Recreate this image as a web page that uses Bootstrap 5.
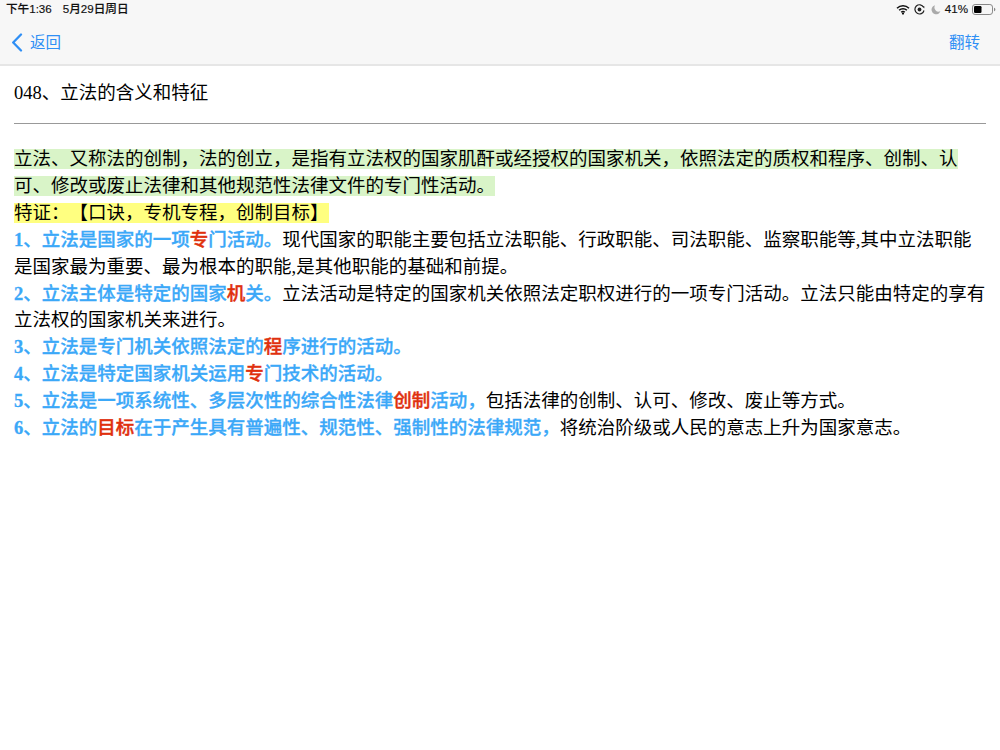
<!DOCTYPE html>
<html lang="zh">
<head>
<meta charset="utf-8">
<title>立法的含义和特征</title>
<link rel="stylesheet" href="https://cdn.jsdelivr.net/npm/bootstrap@5.3.0/dist/css/bootstrap.min.css">
<style>
html,body{height:100%;}
body{background:#fff;color:#000;font-family:"Liberation Serif","Noto Sans CJK SC",serif;overflow:hidden;text-spacing-trim:space-all;}
.topbar{background:#f7f7f7;border-bottom:2px solid #e6e6e6;height:66px;font-family:"Liberation Sans","Noto Sans CJK SC",sans-serif;}
.statusrow{height:18px;padding:0 4px 0 6px;font-size:11.6px;line-height:18px;color:#111;font-weight:500;-webkit-text-stroke:.15px #111;}
.gapdate{margin-left:11px;}
.navrow{height:46px;padding:3px 20px 0 11px;font-size:15.5px;color:#2f8ff5;}
.backlink{gap:7px;}
.sysicons{gap:4px;}
.moonmark{margin-left:2px;}
.doc{padding:17px 14px 0 14px;font-size:18.5px;line-height:26.9px;}
.doctitle{height:40px;line-height:20px;margin:0;font-size:18.5px;font-weight:400;}
.docrule{border:0;border-top:1px solid #999;opacity:1;margin:0 0 22px 0;}
.doc p{margin:0;}
.hlgreen{background:#d9f4c8;}
.hlyellow{background:#ffff80;}
.blue{color:#3ba8f8;font-weight:500;-webkit-text-stroke:.3px #3ba8f8;}
.blue b{font-weight:700;}
.red{color:#e0300d;font-weight:500;-webkit-text-stroke:.4px #e0300d;}
</style>
</head>
<body>
<div class="topbar">
  <div class="statusrow d-flex justify-content-between align-items-center">
    <div><span>下午1:36</span><span class="gapdate">5月29日周日</span></div>
    <div class="sysicons d-flex align-items-center">
      <svg width="14" height="11" viewBox="0 0 14 11" aria-hidden="true"><path d="M1 4.2a8.6 8.6 0 0 1 12 0M3.1 6.3a5.6 5.6 0 0 1 7.8 0M5.2 8.3a2.6 2.6 0 0 1 3.6 0" fill="none" stroke="#111" stroke-width="1.5"/><circle cx="7" cy="9.6" r="1.1" fill="#111"/></svg>
      <svg width="11" height="11" viewBox="0 0 11 11" aria-hidden="true"><path d="M9.6 3.2A4.6 4.6 0 1 0 10 6.5" fill="none" stroke="#222" stroke-width="1.2"/><path d="M8.4 2.2l2.1.2-.3 2.2z" fill="#222"/><circle cx="5.5" cy="5.5" r="1.9" fill="#222"/></svg>
      <svg width="10" height="11" viewBox="0 0 11 11" class="moonmark" aria-hidden="true"><path d="M4.5.8a5 5 0 1 0 5.8 6.6A4.6 4.6 0 0 1 4.5.8z" fill="#aaa"/></svg>
      <span>41%</span>
      <svg width="24" height="11" viewBox="0 0 24 11" aria-hidden="true"><rect x=".5" y=".5" width="20" height="10" rx="2.6" fill="none" stroke="#888"/><rect x="2" y="2" width="7.5" height="7" rx="1.2" fill="#000"/><path d="M22 3.8c1 .3 1.4.9 1.4 1.7s-.4 1.4-1.4 1.7z" fill="#888"/></svg>
    </div>
  </div>
  <div class="navrow d-flex justify-content-between align-items-center">
    <div class="backlink d-flex align-items-center">
      <svg width="12" height="19" viewBox="0 0 12 19" aria-hidden="true"><path d="M10 1.5 2.2 9.5l7.8 8" fill="none" stroke="#2f8ff5" stroke-width="2.3" stroke-linecap="round" stroke-linejoin="round"/></svg>
      <span>返回</span>
    </div>
    <div>翻转</div>
  </div>
</div>
<main class="doc">
  <h1 class="doctitle">048、立法的含义和特征</h1>
  <hr class="docrule">
  <p><span class="hlgreen">立法、又称法的创制，法的创立，是指有立法权的国家肌酐或经授权的国家机关，依照法定的质权和程序、创制、认可、修改或废止法律和其他规范性法律文件的专门性活动。</span></p>
  <p><span class="hlyellow">特证：【口诀，专机专程，创制目标】</span></p>
  <p><span class="blue"><b>1</b>、立法是国家的一项</span><span class="red">专</span><span class="blue">门活动。</span>现代国家的职能主要包括立法职能、行政职能、司法职能、监察职能等,其中立法职能是国家最为重要、最为根本的职能,是其他职能的基础和前提。</p>
  <p><span class="blue"><b>2</b>、立法主体是特定的国家</span><span class="red">机</span><span class="blue">关。</span>立法活动是特定的国家机关依照法定职权进行的一项专门活动。立法只能由特定的享有立法权的国家机关来进行。</p>
  <p><span class="blue"><b>3</b>、立法是专门机关依照法定的</span><span class="red">程</span><span class="blue">序进行的活动。</span></p>
  <p><span class="blue"><b>4</b>、立法是特定国家机关运用</span><span class="red">专</span><span class="blue">门技术的活动。</span></p>
  <p><span class="blue"><b>5</b>、立法是一项系统性、多层次性的综合性法律</span><span class="red">创制</span><span class="blue">活动，</span>包括法律的创制、认可、修改、废止等方式。</p>
  <p><span class="blue"><b>6</b>、立法的</span><span class="red">目标</span><span class="blue">在于产生具有普遍性、规范性、强制性的法律规范，</span>将统治阶级或人民的意志上升为国家意志。</p>
</main>
<script src="https://cdn.jsdelivr.net/npm/bootstrap@5.3.0/dist/js/bootstrap.bundle.min.js"></script>
</body>
</html>
